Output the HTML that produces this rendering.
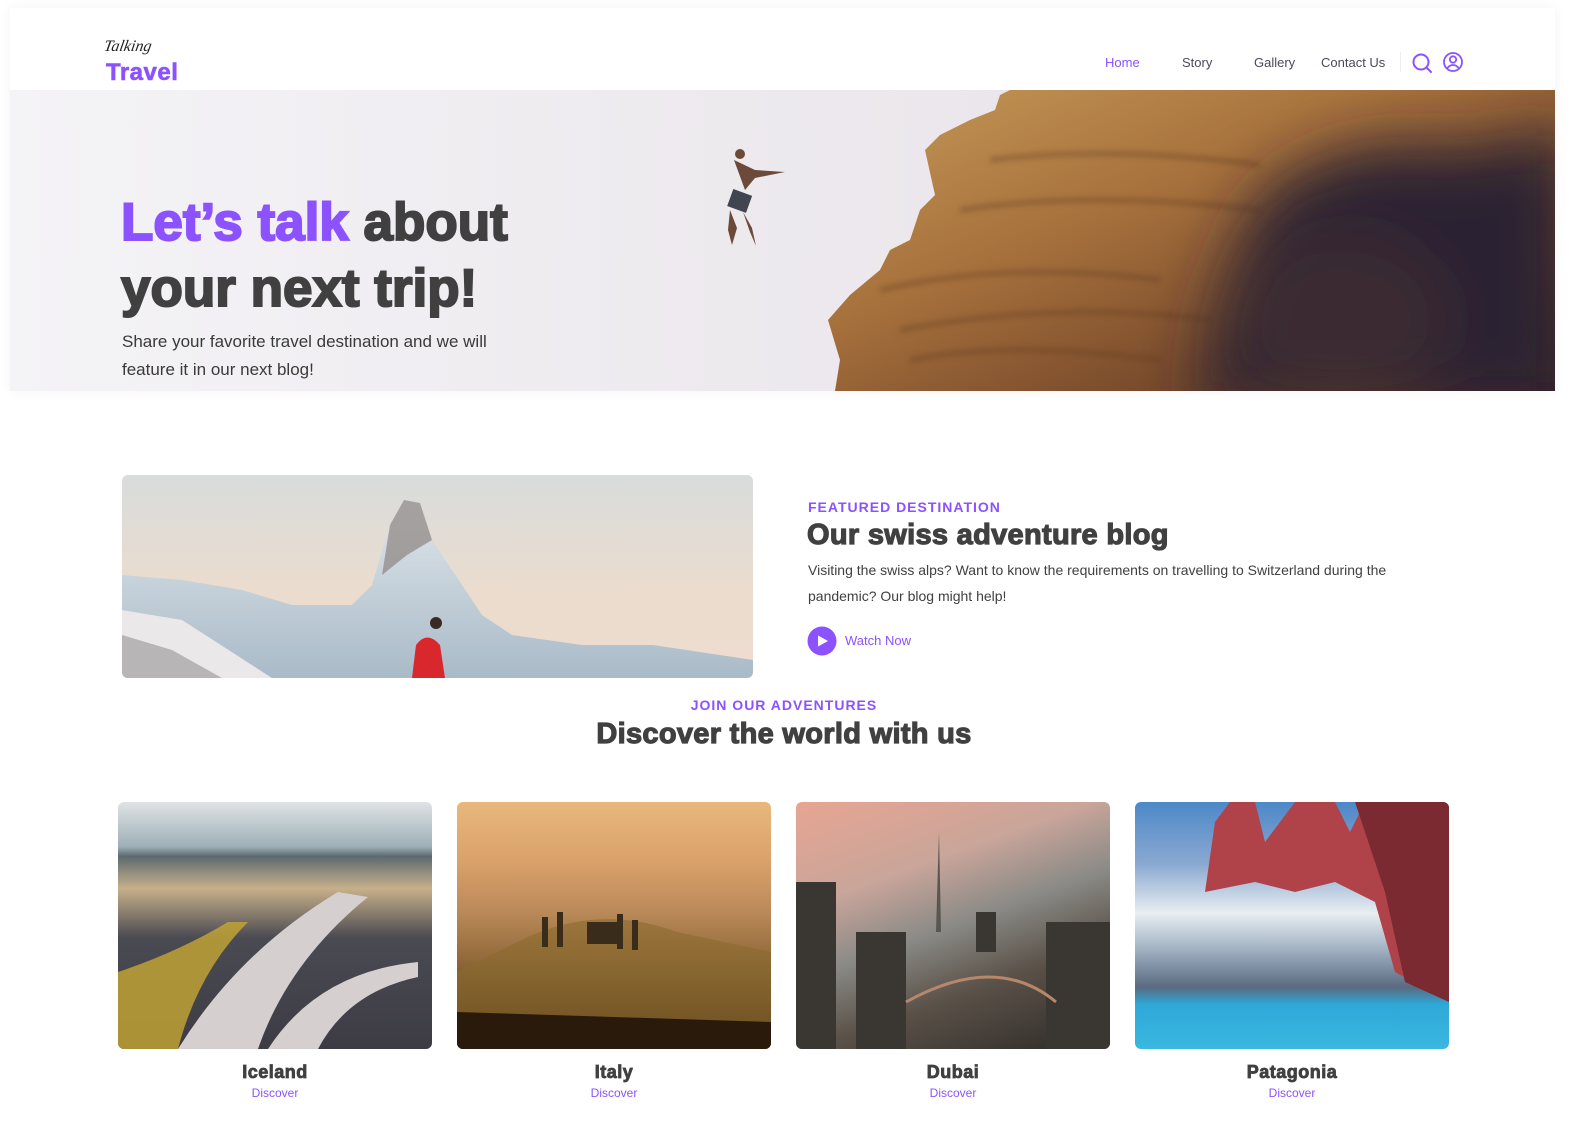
<!DOCTYPE html>
<html><head><meta charset="utf-8">
<style>
*{margin:0;padding:0;box-sizing:border-box}
body{width:1576px;height:1122px;background:#fff;font-family:"Liberation Sans",sans-serif;position:relative;overflow:hidden;color:#404040}
.abs{position:absolute}
.disp{font-family:"Liberation Sans",sans-serif;font-weight:900;color:#404040;letter-spacing:0;-webkit-text-stroke:2px #404040}
.nav a{position:absolute;top:55px;font-size:13px;color:#4a4a5a;text-decoration:none}
.card{position:absolute;top:802px;width:314px;height:247px;border-radius:6px;overflow:hidden}
.cname{position:absolute;top:1062px;width:314px;text-align:center;font-size:18px;font-weight:900;color:#404040;-webkit-text-stroke:.8px #404040;letter-spacing:.5px}
.cdisc{position:absolute;top:1086px;width:314px;text-align:center;font-size:12px;color:#8c52ff}
</style></head><body>
<div class="abs" style="left:10px;top:8px;width:1545px;height:383px;box-shadow:0 0 12px rgba(0,0,0,.05)"></div>
<div class="abs" style="left:104px;top:38px;font-family:'Liberation Serif',serif;font-style:italic;font-size:16px;color:#222;transform:skewX(-10deg)">Talking</div>
<div class="abs" style="left:106px;top:59px;font-size:24px;font-weight:900;color:#8c52ff;letter-spacing:.5px;-webkit-text-stroke:.6px #8c52ff">Travel</div>
<div class="nav">
<a style="left:1105px;color:#8c52ff">Home</a>
<a style="left:1182px">Story</a>
<a style="left:1254px">Gallery</a>
<a style="left:1321px">Contact Us</a>
</div>
<div class="abs" style="left:1400px;top:52px;width:1px;height:20px;background:#eee"></div>
<svg class="abs" style="left:1411px;top:52px" width="22" height="22" viewBox="0 0 22 22" fill="none" stroke="#8c52ff" stroke-width="2"><circle cx="10" cy="10" r="7.5"/><path d="M15.5 15.5L20 20" stroke-linecap="round"/></svg>
<svg class="abs" style="left:1442px;top:51px" width="22" height="22" viewBox="0 0 22 22" fill="none" stroke="#8c52ff" stroke-width="1.8"><circle cx="11" cy="11" r="9"/><circle cx="11" cy="8.5" r="3.2"/><path d="M5.2 17.5c1.5-2.5 3.5-3.5 5.8-3.5s4.3 1 5.8 3.5"/></svg>
<svg class="abs" style="left:10px;top:90px" width="1545" height="301" viewBox="0 0 1545 301">
<defs>
<linearGradient id="sky" x1="0" y1="0" x2="1" y2="0"><stop offset="0" stop-color="#f4f3f6"/><stop offset=".6" stop-color="#ebe7ec"/><stop offset="1" stop-color="#e6e0e4"/></linearGradient>
<linearGradient id="rock" x1="0" y1="0" x2="1" y2="1"><stop offset="0" stop-color="#c79a58"/><stop offset=".4" stop-color="#a6703c"/><stop offset=".8" stop-color="#6d4128"/><stop offset="1" stop-color="#3e2626"/></linearGradient>
<filter id="bl" x="-50%" y="-50%" width="200%" height="200%"><feGaussianBlur stdDeviation="30"/></filter>
<filter id="bl2"><feGaussianBlur stdDeviation="3"/></filter>
</defs>
<rect width="1545" height="301" fill="url(#sky)"/>
<path d="M1000 0 L1545 0 L1545 301 L825 301 L830 270 L818 230 L840 205 L870 180 L880 160 L900 150 L910 120 L925 105 L915 60 L930 45 L960 30 L985 20 L990 5 Z" fill="url(#rock)"/>
<g filter="url(#bl2)" stroke="#5e3a22" fill="none" opacity=".4"><path d="M870 200 Q1000 170 1150 190 M890 240 Q1050 210 1200 230 M950 120 Q1080 100 1250 120 M900 270 Q1000 250 1150 270 M980 70 Q1100 55 1250 75" stroke-width="5"/></g>
<g filter="url(#bl)"><path d="M1250 110 Q1330 40 1450 60 L1560 40 L1560 320 L1190 320 Q1200 200 1250 110Z" fill="#2a2030"/><ellipse cx="1330" cy="230" rx="110" ry="90" fill="#3a2a30"/></g>
<g fill="#6b4a3a"><circle cx="730" cy="64" r="5"/><path d="M724 70 L745 80 L775 82 L745 88 L735 100 Z"/><path d="M720 120 L718 140 L722 155 L727 138 Z M733 122 L740 142 L746 156 L742 138 Z"/></g>
<rect x="720" y="102" width="20" height="18" fill="#404550" transform="rotate(20 730 110)"/>
</svg>
<div class="abs disp" style="left:121px;top:190px;font-size:53px;line-height:66px;width:620px"><span style="color:#8c52ff;-webkit-text-stroke:2px #8c52ff">Let’s talk</span> about<br>your next trip!</div>
<div class="abs" style="left:122px;top:328px;font-size:17px;line-height:28px;color:#3a3a3a">Share your favorite travel destination and we will<br>feature it in our next blog!</div>
<svg class="abs" style="left:122px;top:475px;border-radius:6px" width="631" height="203" viewBox="0 0 631 203">
<defs><linearGradient id="msky" x1="0" y1="0" x2="0" y2="1"><stop offset="0" stop-color="#d8dcdc"/><stop offset=".6" stop-color="#ecdccd"/><stop offset="1" stop-color="#eddcd0"/></linearGradient>
<linearGradient id="snow" x1="0" y1="0" x2="0" y2="1"><stop offset="0" stop-color="#dfe6ea"/><stop offset="1" stop-color="#a9bac8"/></linearGradient></defs>
<rect width="631" height="203" fill="url(#msky)"/>
<path d="M0 100 L60 105 L120 115 L170 130 L230 130 L250 110 L268 50 L282 25 L298 28 L310 65 L330 95 L360 140 L390 160 L460 170 L531 170 L631 185 L631 203 L0 203 Z" fill="url(#snow)"/>
<path d="M268 50 L282 25 L298 28 L310 65 L285 80 L260 100 Z" fill="#8d8580" opacity=".7"/>
<path d="M0 135 L60 145 L150 203 L0 203 Z" fill="#ebe8ea"/>
<path d="M0 160 L50 175 L100 203 L0 203Z" fill="#555" opacity=".35"/>
<path d="M290 203 L294 170 Q305 155 318 170 L323 203 Z" fill="#d9272e"/>
<circle cx="314" cy="148" r="6" fill="#3a2a26"/>
</svg>
<div class="abs" style="left:808px;top:499px;font-size:14px;font-weight:700;color:#8c52ff;letter-spacing:1px">FEATURED DESTINATION</div>
<div class="abs disp" style="left:807px;top:519px;font-size:29px;-webkit-text-stroke:1.2px #404040;letter-spacing:.3px">Our swiss adventure blog</div>
<div class="abs" style="left:808px;top:557px;font-size:14px;line-height:26px;color:#404040;width:620px">Visiting the swiss alps? Want to know the requirements on travelling to Switzerland during the pandemic? Our blog might help!</div>
<svg class="abs" style="left:807px;top:626px" width="30" height="30" viewBox="0 0 30 30"><circle cx="15" cy="15" r="14.5" fill="#8c52ff"/><path d="M11 9.5 L21 15 L11 20.5 Z" fill="#fff"/></svg>
<div class="abs" style="left:845px;top:633px;font-size:13px;color:#8c52ff">Watch Now</div>
<div class="abs" style="left:0;width:1568px;text-align:center;top:697px;font-size:14px;font-weight:700;color:#8c52ff;letter-spacing:1px">JOIN OUR ADVENTURES</div>
<div class="abs disp" style="left:0;width:1568px;text-align:center;top:718px;font-size:29px;-webkit-text-stroke:1.2px #404040;letter-spacing:.3px">Discover the world with us</div>
<div class="card" style="left:118px;background:linear-gradient(180deg,#dfe3e6 0%,#9fb0b8 18%,#5c6a70 22%,#c7b08a 35%,#4a4a52 55%,#3d3c44 100%)">
<svg width="314" height="247" viewBox="0 0 314 247"><path d="M0 170 Q60 150 110 120 L130 120 Q80 170 60 247 L0 247Z" fill="#c7a733" opacity=".8"/><path d="M60 247 Q120 150 220 90 L250 95 Q170 160 140 247Z M150 247 Q200 170 300 160 L300 175 Q230 190 200 247Z" fill="#d5cfd0"/></svg></div>
<div class="card" style="left:457px;background:linear-gradient(180deg,#e8b87c 0%,#d9a06a 25%,#b98958 45%,#9a7040 60%,#6a4a22 80%,#3a2410 100%)">
<svg width="314" height="247" viewBox="0 0 314 247"><path d="M60 140 Q140 100 220 130 L314 150 L314 247 L0 247 L0 170Z" fill="#8a6a2e" opacity=".6"/><g fill="#3a2c1a"><rect x="85" y="115" width="6" height="30"/><rect x="100" y="110" width="6" height="35"/><rect x="160" y="112" width="6" height="35"/><rect x="175" y="118" width="6" height="30"/><rect x="130" y="120" width="30" height="22"/></g><path d="M0 210 L314 220 L314 247 L0 247Z" fill="#2a1a0c"/></svg></div>
<div class="card" style="left:796px;background:linear-gradient(160deg,#e7a592 0%,#c9a59a 30%,#8a8a86 50%,#5a5148 70%,#2e2a28 100%)">
<svg width="314" height="247" viewBox="0 0 314 247"><path d="M143 30 L145 130 L140 130Z" fill="#5a5550"/><g fill="#3a3632"><rect x="0" y="80" width="40" height="167"/><rect x="60" y="130" width="50" height="117"/><rect x="250" y="120" width="64" height="127"/><rect x="180" y="110" width="20" height="40"/></g><path d="M110 200 Q200 150 260 200" stroke="#b7876a" stroke-width="3" fill="none"/></svg></div>
<div class="card" style="left:1135px;background:linear-gradient(180deg,#4c88c8 0%,#8aa8d0 25%,#e8eef2 45%,#a0b0c2 60%,#5a6a80 75%,#2ea8d8 82%,#3ab8e0 100%)">
<svg width="314" height="247" viewBox="0 0 314 247"><path d="M70 90 L80 20 L95 0 L120 0 L130 40 L160 0 L200 0 L215 30 L230 0 L314 0 L314 200 L260 170 L240 100 L200 80 L160 90 L120 80Z" fill="#b0434a"/><path d="M220 0 L314 0 L314 200 L270 180 L250 90Z" fill="#7a2a30"/></svg></div>
<div class="cname" style="left:118px">Iceland</div><div class="cdisc" style="left:118px">Discover</div>
<div class="cname" style="left:457px">Italy</div><div class="cdisc" style="left:457px">Discover</div>
<div class="cname" style="left:796px">Dubai</div><div class="cdisc" style="left:796px">Discover</div>
<div class="cname" style="left:1135px">Patagonia</div><div class="cdisc" style="left:1135px">Discover</div>
</body></html>
